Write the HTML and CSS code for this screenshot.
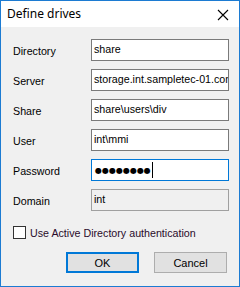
FILE: index.html
```html
<!DOCTYPE html>
<html lang="en">
<head>
  <meta charset="UTF-8">
  <title>Define drives</title>
  <link rel="stylesheet" href="styles.css">
</head>
<body>
  <div class="window">
    <div class="titlebar">
      <span class="title">Define drives</span>
      <svg class="close" width="12" height="12" viewBox="0 0 12 12">
        <path d="M1 1 L11 11 M11 1 L1 11" stroke="#000" stroke-width="1.1" fill="none"/>
      </svg>
    </div>
    <div class="content">
      <div class="form">
        <label>Directory</label>
        <div class="field">share</div>
        <label>Server</label>
        <div class="field">storage.int.sampletec-01.com</div>
        <label>Share</label>
        <div class="field">share\users\div</div>
        <label>User</label>
        <div class="field">int\mmi</div>
        <label>Password</label>
        <div class="field focused"><span class="dots">●●●●●●●●</span><span class="caret"></span></div>
        <label>Domain</label>
        <div class="field disabled">int</div>
      </div>
      <div class="check-row">
        <span class="checkbox"></span>
        <span>Use Active Directory authentication</span>
      </div>
      <div class="buttons">
        <button class="btn default">OK</button>
        <button class="btn">Cancel</button>
      </div>
    </div>
  </div>
</body>
</html>
```
FILE: styles.css
```css
body {
  margin: 0;
  font-family: "Liberation Sans", Arial, sans-serif;
  font-size: 10.7px;
  color: #000;
}

.window {
  width: 240px;
  height: 287px;
  box-sizing: border-box;
  border: 1px solid #1c7bd2;
  background-color: #f0f0f0;
  display: flex;
  flex-direction: column;
}

.titlebar {
  height: 26px;
  background-color: #fff;
  display: flex;
  align-items: center;
  justify-content: space-between;
  padding: 0 10px 0 6px;
}

.title {
  font-family: "Noto Sans", sans-serif;
  font-size: 12px;
  padding-bottom: 1px;
}

.close {
  margin-top: 1px;
}

.content {
  padding: 12px 12px 0 12px;
}

.form {
  display: grid;
  grid-template-columns: 78px 138px;
  grid-auto-rows: 22px;
  row-gap: 8px;
  align-items: center;
}

.form label {
  padding-top: 1px;
}

.field {
  height: 22px;
  box-sizing: border-box;
  border: 1px solid #7a7a7a;
  background-color: #fff;
  padding: 3px 2px 0 2px;
  white-space: nowrap;
  overflow: hidden;
  display: flex;
  align-items: flex-start;
}

.field.focused {
  border-color: #0078d7;
  align-items: center;
  padding-top: 0;
}

.field.disabled {
  background-color: #f0f0f0;
  border-color: #a0a0a0;
}

.dots {
  font-family: "DejaVu Sans", sans-serif;
  font-size: 8px;
  letter-spacing: 0;
  padding-left: 1px;
}

.caret {
  display: inline-block;
  width: 1px;
  height: 16px;
  background-color: #000;
  margin-left: 1px;
}

.check-row {
  display: flex;
  align-items: center;
  gap: 4px;
  margin-top: 15px;
  color: #2a0a2a;
}

.checkbox {
  width: 13px;
  height: 13px;
  box-sizing: border-box;
  border: 1px solid #333;
  background-color: #fff;
}

.buttons {
  display: flex;
  justify-content: flex-end;
  gap: 15px;
  margin-top: 13px;
}

.btn {
  width: 73px;
  height: 21px;
  box-sizing: border-box;
  border: 1px solid #adadad;
  background-color: #e1e1e1;
  font-family: "Liberation Sans", Arial, sans-serif;
  font-size: 11px;
  color: #000;
  padding: 0;
}

.btn.default {
  border: 2px solid #0078d7;
}
```
